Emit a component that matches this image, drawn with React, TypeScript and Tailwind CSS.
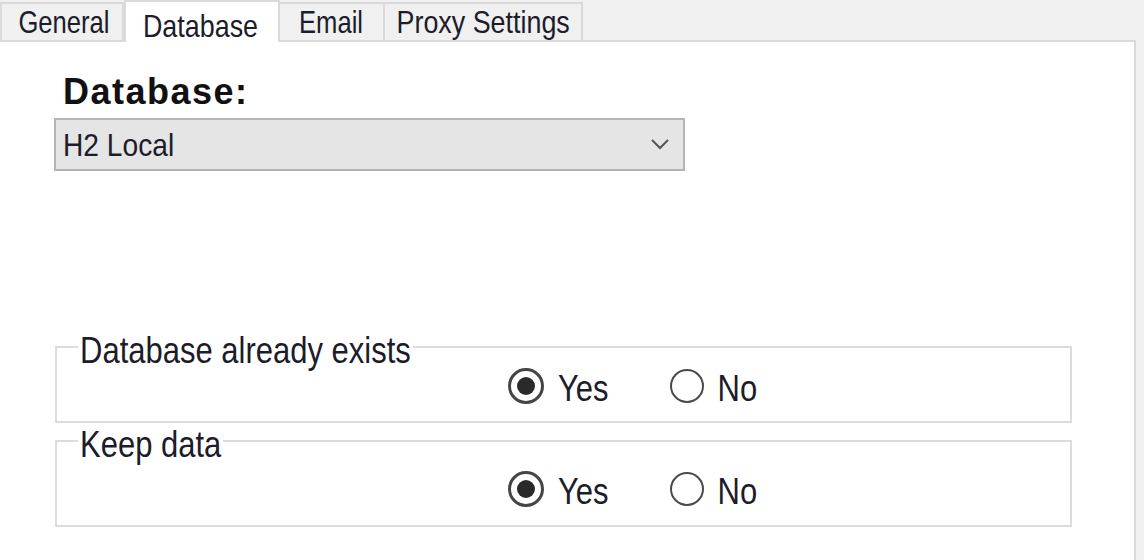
import React from "react";

function Cond({ children, cls = "" }: { children: React.ReactNode; cls?: string }) {
  return <span className={`inline-block whitespace-nowrap ${cls}`}>{children}</span>;
}

function Radio({ checked, label }: { checked: boolean; label: string }) {
  return (
    <div className="flex items-center h-[36px]">
      {checked ? (
        <div className="w-[36px] h-[36px] rounded-full border-[3px] border-[#454545] flex items-center justify-center bg-white">
          <div className="w-[18px] h-[18px] rounded-full bg-[#2a2a2a]" />
        </div>
      ) : (
        <div className="w-[34px] h-[34px] rounded-full border-[2.5px] border-[#4a4a4a] bg-white" />
      )}
      <span className="ml-[14px] text-[31px] leading-none text-[#1c1c2a] inline-block scale-y-[1.2] translate-y-[2px]">
        {label}
      </span>
    </div>
  );
}

function Group({ title, h, pt }: { title: string; h: string; pt: string }) {
  return (
    <fieldset className={`border-2 border-[#dcdcdc] ml-[55px] w-[1017px] ${h} px-[21px] pb-0 m-0`}>
      <legend className="text-[31px] leading-[26px] text-[#1c1c2a] px-[2px]">
        <span className="inline-block scale-y-[1.18] translate-y-[4px]">{title}</span>
      </legend>
      <div className={`flex items-center gap-[61px] pl-[430px] ${pt}`}>
        <Radio checked label="Yes" />
        <Radio checked={false} label="No" />
      </div>
    </fieldset>
  );
}

export default function App() {
  return (
    <div
      className="w-[1144px] h-[560px] bg-[#f0f0f0] overflow-hidden flex flex-col"
      style={{ fontFamily: '"Liberation Sans", Arial, sans-serif' }}
    >
      <div className="flex h-[40px] items-end relative z-10">
        <div className="h-[38px] w-[124px] border-2 border-b-0 border-[#dadada] bg-[#f0f0f0] flex items-center justify-center text-[32px] text-[#1c1c2a]">
          <Cond cls="scale-x-[0.8] translate-x-[2px]">General</Cond>
        </div>
        <div className="h-[42px] w-[156px] border-2 border-b-0 border-[#dadada] bg-white flex items-start justify-center text-[32px] text-[#1c1c2a] -mb-[2px]">
          <Cond cls="scale-x-[0.84] -translate-x-[2px]">Database</Cond>
        </div>
        <div className="h-[38px] w-[105px] border-2 border-b-0 border-l-0 border-[#dadada] bg-[#f0f0f0] flex items-center justify-center text-[32px] text-[#1c1c2a]">
          <Cond cls="scale-x-[0.8]">Email</Cond>
        </div>
        <div className="h-[38px] w-[198px] border-2 border-b-0 border-l-0 border-[#dadada] bg-[#f0f0f0] flex items-center justify-center text-[32px] text-[#1c1c2a]">
          <Cond cls="scale-x-[0.84]">Proxy Settings</Cond>
        </div>
      </div>
      <div className="bg-white border-t-2 border-r-2 border-[#dadada] w-[1136px] flex-1 flex flex-col">
        <div className="ml-[63px] mt-[32px] text-[36px] tracking-[1.5px] font-bold leading-none text-[#111]">Database:</div>
        <div className="ml-[54px] mt-[8px] w-[631px] h-[53px] bg-[#e5e5e5] border-2 border-[#b4b4b4] flex items-center justify-between pl-[7px] pr-[14px]">
          <span className="text-[32px] text-[#1c1c2a] leading-none inline-block whitespace-nowrap scale-x-[0.88] origin-left">H2 Local</span>
          <svg width="18" height="11" viewBox="0 0 18 11">
            <path d="M1 1 L9 9 L17 1" fill="none" stroke="#555" strokeWidth="2" />
          </svg>
        </div>
        <div className="mt-[163px] flex flex-col gap-[5px]">
          <Group title="Database already exists" h="h-[89px]" pt="pt-[8px]" />
          <Group title="Keep data" h="h-[99px]" pt="pt-[17px]" />
        </div>
      </div>
    </div>
  );
}
